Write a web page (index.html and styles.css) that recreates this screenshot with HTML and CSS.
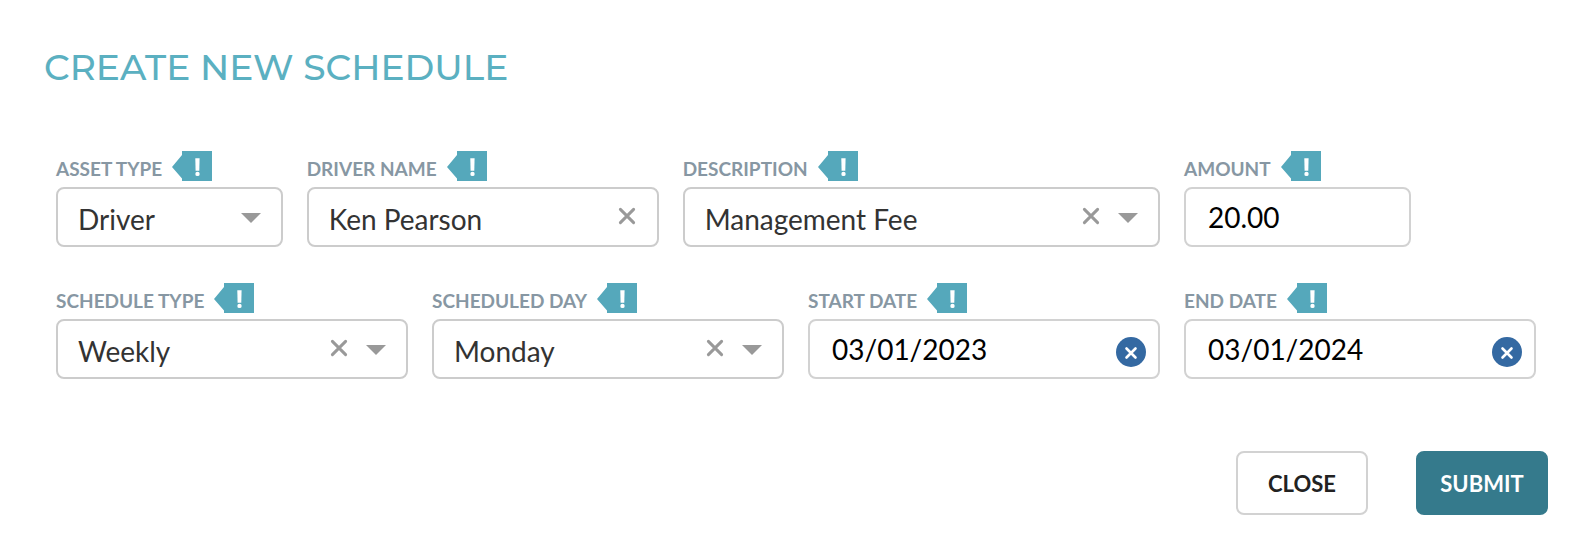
FILE: index.html
```
<!DOCTYPE html>
<html lang="en">
<head>
<meta charset="utf-8">
<title>Create New Schedule</title>
<link rel="stylesheet" href="styles.css">
</head>
<body>
<svg class="defs" aria-hidden="true">
  <symbol id="hint" viewBox="0 0 40 30">
    <path fill="#55a8bb" d="M10 0h30v30H10v-2.500L0 16 10 4z"/>
    <path fill="#fff" d="M23.300 7.300h4.300l-.3 12.400h-3.700z"/>
    <circle fill="#fff" cx="25.500" cy="22.900" r="2.200"/>
  </symbol>
  <symbol id="cross" viewBox="0 0 20 20">
    <path d="M3.400 3.400l13.200 13.200M16.600 3.400L3.400 16.600" fill="none" stroke="#999" stroke-width="3" stroke-linecap="round"/>
  </symbol>
  <symbol id="clear" viewBox="0 0 30 30">
    <circle cx="15" cy="15" r="15" fill="#3469a2"/>
    <path d="M10.500 11.500l9 9M19.500 11.500l-9 9" fill="none" stroke="#fff" stroke-width="2.600" stroke-linecap="round"/>
  </symbol>
  <symbol id="arrow" viewBox="0 0 20 14">
    <path d="M0 4h20L10 14z" fill="#999"/>
  </symbol>
</svg>
<main class="dialog">
  <h1 class="title">CREATE NEW SCHEDULE</h1>
  <form class="form">
    <div class="fields">
      <div class="field span-2">
        <div class="caption"><label for="asset">ASSET TYPE</label><svg class="hint"><use href="#hint"/></svg></div>
        <div class="box">
          <select id="asset" class="control picker"><option>Driver</option></select>
          <div class="tools"><svg class="arrow"><use href="#arrow"/></svg></div>
        </div>
      </div>
      <div class="field span-3">
        <div class="caption"><label for="driver">DRIVER NAME</label><svg class="hint"><use href="#hint"/></svg></div>
        <div class="box">
          <input id="driver" class="control picker" type="text" value="Ken Pearson">
          <div class="tools"><button type="button" class="reset" aria-label="Clear driver name"><svg class="cross"><use href="#cross"/></svg></button></div>
        </div>
      </div>
      <div class="field span-4">
        <div class="caption"><label for="description">DESCRIPTION</label><svg class="hint"><use href="#hint"/></svg></div>
        <div class="box">
          <select id="description" class="control picker"><option>Management Fee</option></select>
          <div class="tools"><button type="button" class="reset" aria-label="Clear description"><svg class="cross"><use href="#cross"/></svg></button><svg class="arrow"><use href="#arrow"/></svg></div>
        </div>
      </div>
      <div class="field span-2">
        <div class="caption"><label for="amount">AMOUNT</label><svg class="hint"><use href="#hint"/></svg></div>
        <div class="box">
          <input id="amount" class="control entry" type="text" value="20.00">
        </div>
      </div>
      <div class="field span-3 row-start">
        <div class="caption"><label for="type">SCHEDULE TYPE</label><svg class="hint"><use href="#hint"/></svg></div>
        <div class="box">
          <select id="type" class="control picker"><option>Weekly</option></select>
          <div class="tools"><button type="button" class="reset" aria-label="Clear schedule type"><svg class="cross"><use href="#cross"/></svg></button><svg class="arrow"><use href="#arrow"/></svg></div>
        </div>
      </div>
      <div class="field span-3">
        <div class="caption"><label for="day">SCHEDULED DAY</label><svg class="hint"><use href="#hint"/></svg></div>
        <div class="box">
          <select id="day" class="control picker"><option>Monday</option></select>
          <div class="tools"><button type="button" class="reset" aria-label="Clear scheduled day"><svg class="cross"><use href="#cross"/></svg></button><svg class="arrow"><use href="#arrow"/></svg></div>
        </div>
      </div>
      <div class="field span-3">
        <div class="caption"><label for="start">START DATE</label><svg class="hint"><use href="#hint"/></svg></div>
        <div class="box">
          <input id="start" class="control entry" type="text" value="03/01/2023">
          <button type="button" class="reset clear" aria-label="Clear start date"><svg class="disc"><use href="#clear"/></svg></button>
        </div>
      </div>
      <div class="field span-3">
        <div class="caption"><label for="end">END DATE</label><svg class="hint"><use href="#hint"/></svg></div>
        <div class="box">
          <input id="end" class="control entry" type="text" value="03/01/2024">
          <button type="button" class="reset clear" aria-label="Clear end date"><svg class="disc"><use href="#clear"/></svg></button>
        </div>
      </div>
    </div>
    <div class="actions">
      <button type="button" class="button">CLOSE</button>
      <button type="submit" class="button primary">SUBMIT</button>
    </div>
  </form>
</main>
</body>
</html>
```
FILE: styles.css
```
* {
  box-sizing: border-box;
}

body {
  margin: 0;
  background: #fff;
  font-family: Lato, sans-serif;
}

svg {
  display: block;
}

.defs {
  position: absolute;
  width: 0;
  height: 0;
}

.dialog {
  padding: 43px 44px;
}

.title {
  margin: 0 0 60px;
  color: #5bb0c1;
  font-family: Montserrat, Inter, sans-serif;
  font-size: 36px;
  font-weight: 500;
  line-height: 48px;
}

.fields {
  display: grid;
  grid-template-columns: repeat(12, minmax(0, 1fr));
  gap: 36px 24px;
  padding: 0 12px;
}

.span-2 {
  grid-column: span 2;
}

.span-3 {
  grid-column: span 3;
}

.span-4 {
  grid-column: span 4;
}

.row-start {
  grid-column: 1 / span 3;
}

.caption {
  display: flex;
  gap: 10px;
  height: 30px;
  margin-bottom: 6px;
  color: #8797a3;
  font-size: 19px;
  font-weight: 700;
  line-height: 36px;
  white-space: nowrap;
}

.hint {
  flex: none;
  width: 40px;
  height: 30px;
}

.box {
  position: relative;
}

.control {
  display: block;
  appearance: none;
  width: 100%;
  height: 60px;
  margin: 0;
  border: 2px solid #ccc;
  border-radius: 8px;
  background: #fff;
  font-family: inherit;
  font-size: 28px;
  line-height: 34px;
  outline: none;
}

.picker {
  padding: 4px 20px 0;
  color: #333;
}

.entry {
  padding: 0 22px;
  border-color: #d2d2d2;
  color: #000;
}

.tools {
  position: absolute;
  top: 19px;
  right: 22px;
  display: flex;
  align-items: center;
  gap: 17px;
  height: 20px;
}

.reset {
  padding: 0;
  border: 0;
  background: none;
}

.cross {
  width: 20px;
  height: 20px;
}

.arrow {
  width: 20px;
  height: 14px;
}

.clear {
  position: absolute;
  top: 18px;
  right: 14px;
}

.disc {
  width: 30px;
  height: 30px;
}

.actions {
  display: flex;
  justify-content: flex-end;
  gap: 48px;
  margin-top: 72px;
}

.button {
  width: 132px;
  height: 64px;
  border: 2px solid #d2d2d2;
  border-radius: 8px;
  background: #fff;
  color: #222;
  font-family: inherit;
  font-size: 22px;
  font-weight: 700;
}

.primary {
  border-color: #357a8c;
  background: #357a8c;
  color: #fff;
}
```
